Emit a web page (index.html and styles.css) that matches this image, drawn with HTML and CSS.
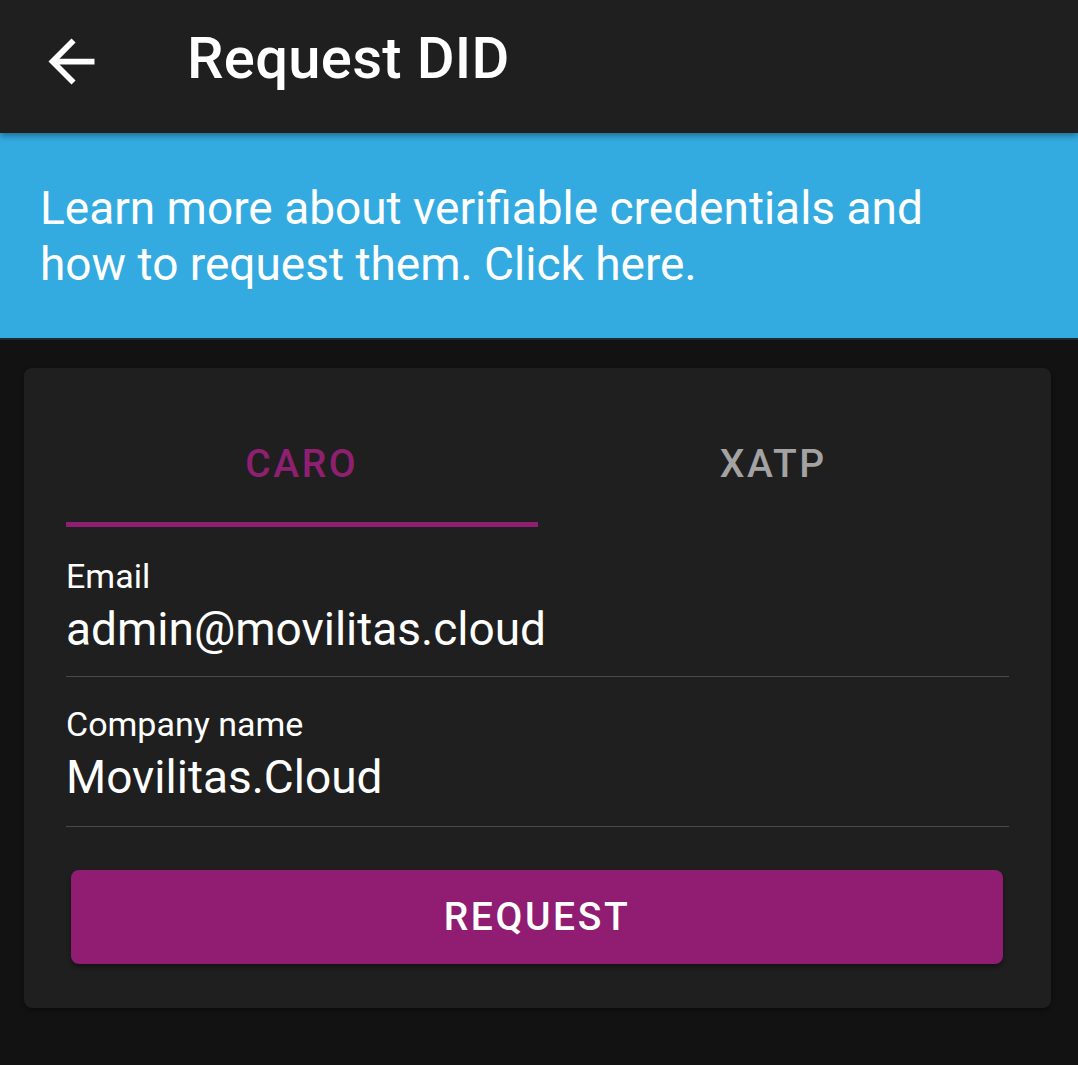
FILE: index.html
```html
<!DOCTYPE html>
<html lang="en">
<head>
    <meta charset="UTF-8">
    <meta name="viewport" content="width=device-width, initial-scale=1.0">
    <title>Request DID</title>
    <link rel="stylesheet" href="styles.css">
</head>
<body>
    <header class="appbar">
        <button class="back" aria-label="Back">
            <svg viewBox="0 0 24 24" width="69" height="69">
                <path d="M20 11H7.83l5.59-5.59L12 4l-8 8 8 8 1.41-1.41L7.83 13H20v-2z" fill="#fff"/>
            </svg>
        </button>
        <h1 class="title">Request DID</h1>
    </header>

    <div class="banner">
        Learn more about verifiable credentials and<br>
        how to request them. Click here.
    </div>

    <main class="content">
        <div class="card">
            <div class="tabs">
                <div class="tab active">CARO</div>
                <div class="tab">XATP</div>
            </div>

            <div class="field first">
                <label class="label">Email</label>
                <div class="value">admin@movilitas.cloud</div>
            </div>
            <div class="field">
                <label class="label">Company name</label>
                <div class="value">Movilitas.Cloud</div>
            </div>

            <button class="request">REQUEST</button>
        </div>
    </main>
</body>
</html>
```

FILE: styles.css
```css
* {
    box-sizing: border-box;
}
body {
    margin: 0;
    background-color: #121212;
    font-family: Roboto, "Noto Sans", Arial, sans-serif;
    color: #fff;
    min-height: 1065px;
}
.appbar {
    height: 133px;
    background-color: #1f1f1f;
    display: flex;
    align-items: center;
    position: relative;
    z-index: 1;
    box-shadow: 0 3px 6px rgba(0,0,0,0.35);
}
.back {
    background: none;
    border: 0;
    padding: 0;
    margin: 0 0 10px 37px;
    width: 69px;
    height: 69px;
    display: flex;
}
.title {
    margin: 0 0 0 81px;
    font-size: 58px;
    font-weight: 500;
    letter-spacing: 0.3px;
    line-height: 1;
    padding-bottom: 18px;
}
.banner {
    background-color: #33abe0;
    padding: 47px 40px 46px;
    font-size: 46px;
    line-height: 56px;
    border-bottom: 2px solid #1c2b2e;
}
.content {
    padding: 28px 27px 0 24px;
}
.card {
    background-color: #1f1f1f;
    border-radius: 8px;
    padding: 40px 42px 44px;
    box-shadow: 0 2px 4px rgba(0,0,0,0.4);
}
.tabs {
    display: flex;
}
.tab {
    flex: 1;
    text-align: center;
    font-size: 39px;
    font-weight: 500;
    letter-spacing: 2.6px;
    line-height: 39px;
    padding: 37px 0 38px;
    color: #a3a3a3;
    border-bottom: 5px solid transparent;
}
.tab.active {
    color: #8f1f70;
    border-bottom-color: #8f1f70;
}
.field {
    padding: 27px 0 22px;
    border-bottom: 1px solid #4a4a4a;
}
.field.first {
    padding: 29px 0 20px;
}
.label {
    display: block;
    font-size: 34px;
    line-height: 40px;
}
.value {
    font-size: 46px;
    line-height: 54px;
    margin-top: 6px;
}
.request {
    display: block;
    width: calc(100% - 11px);
    height: 94px;
    margin: 43px 0 0 5px;
    border: 0;
    border-radius: 8px;
    background-color: #901d71;
    color: #fff;
    font-family: Roboto, "Noto Sans", Arial, sans-serif;
    font-size: 39px;
    font-weight: 500;
    letter-spacing: 2.6px;
    box-shadow: 0 3px 4px rgba(0,0,0,0.4);
}
```
